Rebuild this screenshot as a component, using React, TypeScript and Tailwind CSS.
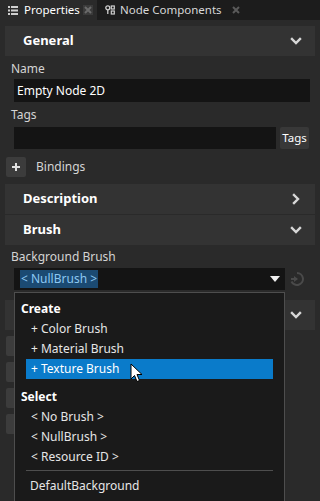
import React from "react";

const Chevron = ({ dir }: { dir: "down" | "right" }) => (
  <svg width="12" height="12" viewBox="0 0 12 12" className="text-[#d8d8d8]">
    {dir === "down" ? (
      <path d="M2 4 L6 8 L10 4" fill="none" stroke="currentColor" strokeWidth="2.4" strokeLinecap="square" />
    ) : (
      <path d="M4 2 L8 6 L4 10" fill="none" stroke="currentColor" strokeWidth="2.4" strokeLinecap="square" />
    )}
  </svg>
);

const Header = ({ title, dir }: { title: string; dir: "down" | "right" }) => (
  <div className="mx-[5px] h-[30px] bg-[#333333] flex items-center justify-between pl-[18px] pr-[13px]">
    <span className="font-bold text-[13px] text-white">{title}</span>
    <Chevron dir={dir} />
  </div>
);

export default function App() {
  return (
    <div
      className="w-[320px] h-[501px] bg-[#2a2a2a] relative overflow-hidden text-[12px] text-[#d4d4d4]"
      style={{ fontFamily: '"Noto Sans", "Open Sans", sans-serif' }}
    >
      {/* tab bar */}
      <div className="h-[20px] bg-[#1c1c1c] flex">
        <div className="w-[97px] bg-[#2a2a2a] flex items-center pl-[8px]">
          <svg width="10" height="9" viewBox="0 0 10 9" className="mr-[6px]">
            <rect x="0" y="0" width="2" height="2" fill="#cfcfcf" />
            <rect x="3" y="0" width="7" height="2" fill="#cfcfcf" />
            <rect x="0" y="3.5" width="2" height="2" fill="#cfcfcf" />
            <rect x="3" y="3.5" width="7" height="2" fill="#cfcfcf" />
            <rect x="0" y="7" width="2" height="2" fill="#cfcfcf" />
            <rect x="3" y="7" width="7" height="2" fill="#cfcfcf" />
          </svg>
          <span className="text-[11.5px] text-white leading-none">Properties</span>
          <div className="ml-auto mr-[4px] w-[10px] h-[10px] bg-[#3a3a3a] flex items-center justify-center">
            <svg width="8" height="8" viewBox="0 0 8 8">
              <path d="M1 1 L7 7 M7 1 L1 7" stroke="#6a6a6a" strokeWidth="2" />
            </svg>
          </div>
        </div>
        <div className="flex items-center pl-[8px]">
          <svg width="10" height="10" viewBox="0 0 10 10" className="mr-[5px]">
            <circle cx="2.8" cy="2.8" r="2" fill="none" stroke="#cfcfcf" strokeWidth="1.3" />
            <path d="M2.8 5 L2.8 9" stroke="#cfcfcf" strokeWidth="1.3" />
            <rect x="6.3" y="1" width="3" height="3" fill="none" stroke="#cfcfcf" strokeWidth="1.2" />
            <rect x="6.3" y="6" width="3" height="3" fill="none" stroke="#cfcfcf" strokeWidth="1.2" />
          </svg>
          <span className="text-[11.5px] text-[#d8d8d8] leading-none">Node Components</span>
          <svg width="8" height="8" viewBox="0 0 8 8" className="ml-[10px]">
            <path d="M1 1 L7 7 M7 1 L1 7" stroke="#5a5a5a" strokeWidth="2" />
          </svg>
        </div>
      </div>

      <div className="pt-[6px]">
        <Header title="General" dir="down" />
        <div className="pl-[11px] mt-[3px] h-[20px] flex items-center">Name</div>
        <div className="ml-[14px] w-[296px] h-[23px] bg-[#141414] flex items-center pl-[3px] text-white">
          Empty Node 2D
        </div>
        <div className="pl-[11px] h-[25px] flex items-center">Tags</div>
        <div className="flex items-center ml-[14px] gap-[4px]">
          <div className="w-[262px] h-[22px] bg-[#141414]" />
          <div className="w-[29px] h-[22px] bg-[#383838] rounded-[2px] flex items-center justify-center text-white text-[11.5px]">
            Tags
          </div>
        </div>
        <div className="flex items-center mt-[8px] ml-[6px] h-[20px]">
          <div className="w-[20px] h-[20px] bg-[#3c3c3c] rounded-[2px] flex items-center justify-center">
            <svg width="8" height="8" viewBox="0 0 8 8">
              <path d="M4 0 V8 M0 4 H8" stroke="#e0e0e0" strokeWidth="2" />
            </svg>
          </div>
          <span className="ml-[10px]">Bindings</span>
        </div>
        <div className="mt-[7px]">
          <Header title="Description" dir="right" />
        </div>
        <div className="mt-[1px]">
          <Header title="Brush" dir="down" />
        </div>
        <div className="pl-[11px] h-[23px] flex items-center">Background Brush</div>
        <div className="flex items-center">
          <div className="ml-[14px] w-[271px] h-[22px] bg-[#141414] flex items-center pl-[6px] pr-[5px]">
            <span className="bg-[#1b4a72] text-[#8cc8f2] px-[1px] h-[18px] flex items-center">&lt; NullBrush &gt;</span>
            <svg width="10" height="6" viewBox="0 0 10 6" className="ml-auto">
              <path d="M0 0 H10 L5 6 Z" fill="#f0f0f0" />
            </svg>
          </div>
          <svg width="14" height="14" viewBox="0 0 14 14" className="ml-[5px]">
            <path d="M7 1 A6 6 0 1 1 1.5 9.5" fill="none" stroke="#4a4a4a" strokeWidth="2" />
            <path d="M4 4 L8 7 L4 10 Z" fill="#4a4a4a" />
            <path d="M1 7 H7" stroke="#4a4a4a" strokeWidth="2" />
          </svg>
        </div>
        {/* section behind popup */}
        <div className="mt-[10px] mx-[5px] h-[30px] bg-[#333333] flex items-center justify-end pr-[13px]">
          <Chevron dir="down" />
        </div>
        <div className="flex flex-col gap-[6px] mt-[6px] ml-[6px]">
          {[0, 1, 2, 3].map((i) => (
            <div key={i} className="w-[20px] h-[20px] bg-[#3c3c3c] rounded-[2px]" />
          ))}
        </div>
      </div>

      {/* popup */}
      <div className="absolute left-[14px] top-[292px] w-[271px] h-[215px] bg-[#1a1a1a] border border-[#4e4e4e] px-[11px] pt-[6px] text-[#e6e6e6]">
        <div className="h-[20px] flex items-center font-bold text-white -ml-[5px]">Create</div>
        <div className="h-[20px] flex items-center pl-[5px]">+ Color Brush</div>
        <div className="h-[20px] flex items-center pl-[5px]">+ Material Brush</div>
        <div className="h-[20px] flex items-center pl-[5px] bg-[#0a7bca] text-white">+ Texture Brush</div>
        <div className="h-[20px] mt-[8px] flex items-center font-bold text-white -ml-[5px]">Select</div>
        <div className="h-[20px] flex items-center pl-[5px]">&lt; No Brush &gt;</div>
        <div className="h-[20px] flex items-center pl-[5px]">&lt; NullBrush &gt;</div>
        <div className="h-[20px] flex items-center pl-[5px]">&lt; Resource ID &gt;</div>
        <div className="h-[1px] bg-[#4e4e4e] mt-[3px] mb-[5px]" />
        <div className="h-[20px] flex items-center pl-[4px]">DefaultBackground</div>
      </div>

      {/* cursor */}
      <svg width="14" height="20" viewBox="0 0 14 20" className="absolute left-[130px] top-[363px]">
        <path d="M1 1 L1 16 L4.5 12.5 L7 18.5 L9.5 17.5 L7 11.5 L12 11.5 Z" fill="#ffffff" stroke="#000000" strokeWidth="1" strokeLinejoin="round" />
      </svg>
    </div>
  );
}
